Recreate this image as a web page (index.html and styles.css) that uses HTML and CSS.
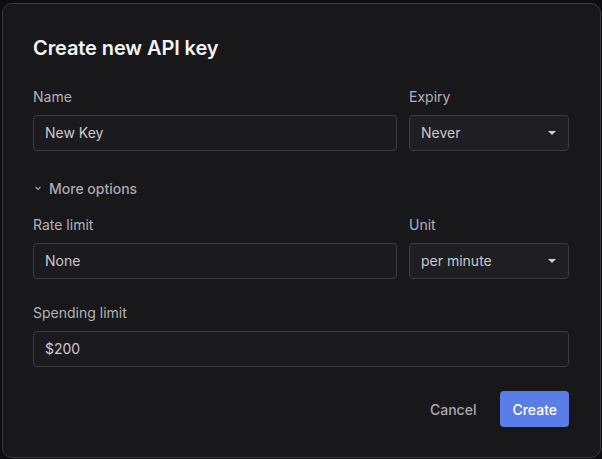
FILE: index.html
```html
<!DOCTYPE html>
<html>
<head>
<meta charset="utf-8">
<link rel="stylesheet" href="styles.css">
</head>
<body>
<div class="dialog">
  <h1 class="title">Create new API key</h1>
  <div class="row first">
    <div class="field grow">
      <label class="label">Name</label>
      <div class="input">New Key</div>
    </div>
    <div class="field side">
      <label class="label">Expiry</label>
      <div class="input select">Never<span class="caret"></span></div>
    </div>
  </div>
  <div class="more">
    <svg width="8" height="8" viewBox="0 0 8 8" class="chev"><path d="M1.5 2.8 L4 5.3 L6.5 2.8" fill="none" stroke="#a9a9b1" stroke-width="1.2"/></svg>
    <span>More options</span>
  </div>
  <div class="row">
    <div class="field grow">
      <label class="label">Rate limit</label>
      <div class="input">None</div>
    </div>
    <div class="field side">
      <label class="label">Unit</label>
      <div class="input select">per minute<span class="caret"></span></div>
    </div>
  </div>
  <div class="field spend">
    <label class="label">Spending limit</label>
    <div class="input">$200</div>
  </div>
  <div class="actions">
    <button class="btn cancel">Cancel</button>
    <button class="btn create">Create</button>
  </div>
</div>
</body>
</html>
```

FILE: styles.css
```css
html, body {
  margin: 0;
  padding: 0;
  background: #0e0e10;
  height: 459px;
  overflow: hidden;
  font-family: Inter, "Noto Sans", sans-serif;
}
.dialog {
  box-sizing: border-box;
  margin: 3px 0 0 2px;
  width: 599px;
  height: 455px;
  background: #18181b;
  border: 1px solid #3a3a3f;
  border-radius: 10px;
  padding: 30px 31px 0 30px;
}
.title {
  margin: 0;
  font-size: 20px;
  line-height: 28px;
  font-weight: 600;
  color: #f4f4f5;
  letter-spacing: -0.1px;
}
.row {
  display: flex;
  gap: 12px;
}
.row.first { margin-top: 25px; }
.field { display: flex; flex-direction: column; }
.grow { flex: 1; }
.side { width: 160px; }
.label {
  font-size: 14px;
  line-height: 20px;
  color: #b2b2b9;
  margin-bottom: 8px;
}
.input {
  box-sizing: border-box;
  height: 36px;
  border: 1px solid #3b3c42;
  border-radius: 4px;
  background: #1b1b1f;
  color: #c9c9ce;
  font-size: 14px;
  line-height: 34px;
  padding: 0 11px;
}
.select {
  position: relative;
  background: #1e1e23;
}
.caret {
  position: absolute;
  right: 12px;
  top: 15px;
  width: 0;
  height: 0;
  border-left: 4px solid transparent;
  border-right: 4px solid transparent;
  border-top: 4px solid #d4d4d8;
}
.more {
  margin-top: 27px;
  margin-bottom: 17px;
  height: 20px;
  display: flex;
  align-items: center;
  gap: 7px;
  font-size: 14px;
  font-weight: 500;
  color: #a9a9b1;
}
.chev { margin-left: 1px; }
.spend { margin-top: 24px; }
.actions {
  margin-top: 24px;
  display: flex;
  justify-content: flex-end;
  gap: 12px;
}
.btn {
  height: 36px;
  border: none;
  border-radius: 4px;
  font-family: Inter, "Noto Sans", sans-serif;
  font-size: 14px;
  font-weight: 500;
  padding: 0 12px;
  cursor: pointer;
}
.cancel {
  background: transparent;
  color: #a9a9b1;
}
.create {
  background: #5b7de8;
  color: #ffffff;
  padding: 0 12px;
}
```
